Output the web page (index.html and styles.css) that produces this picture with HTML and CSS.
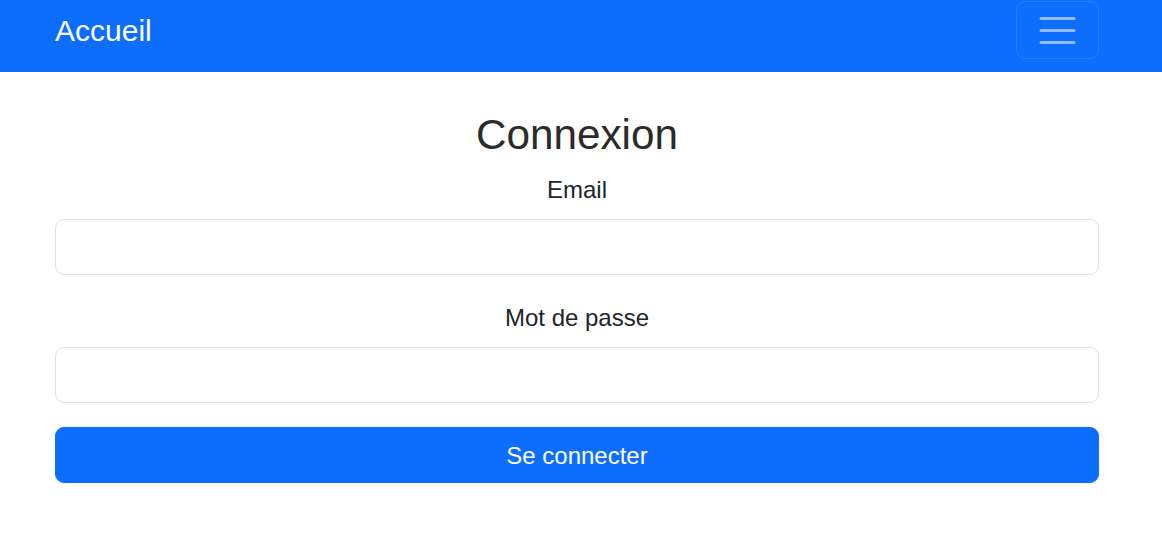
FILE: index.html
```html
<!DOCTYPE html>
<html lang="fr">
<head>
<meta charset="utf-8">
<title>Connexion</title>
<link rel="stylesheet" href="styles.css">
</head>
<body>
<nav class="navbar">
  <div class="nav-inner">
    <a class="brand" href="#">Accueil</a>
    <button class="toggler" type="button" aria-label="Menu">
      <svg class="toggler-icon" viewBox="0 0 30 30" width="45" height="45" aria-hidden="true">
        <path d="M4 7h22M4 15h22M4 23h22" stroke="rgba(255,255,255,0.55)" stroke-width="2" stroke-linecap="round" stroke-miterlimit="10" fill="none"/>
      </svg>
    </button>
  </div>
</nav>
<main class="content">
  <h2 class="title">Connexion</h2>
  <form class="form">
    <div class="field">
      <label class="label" for="email">Email</label>
      <input class="input" id="email" type="email">
    </div>
    <div class="field">
      <label class="label" for="password">Mot de passe</label>
      <input class="input" id="password" type="password">
    </div>
    <button class="submit" type="submit">Se connecter</button>
  </form>
</main>
</body>
</html>
```

FILE: styles.css
```css
* { box-sizing: border-box; }
html, body { margin: 0; padding: 0; }
body {
  font-family: "Liberation Sans", Arial, sans-serif;
  font-size: 24px;
  line-height: 1.5;
  color: #212529;
  background: #fff;
}
.navbar {
  background: #0d6efd;
  height: 72px;
}
.nav-inner {
  width: 1044px;
  margin-left: 55px;
  display: flex;
  justify-content: space-between;
  align-items: flex-start;
}
.brand {
  color: #fff;
  text-decoration: none;
  font-size: 30px;
  line-height: 45px;
  margin-top: 8px;
}
.toggler {
  margin-top: 1px;
  width: 83px;
  height: 58px;
  padding: 0;
  background: transparent;
  border: 1px solid rgba(255,255,255,0.1);
  border-radius: 9px;
  display: flex;
  align-items: center;
  justify-content: center;
}
.toggler-icon { display: block; }
.content {
  width: 1044px;
  margin-left: 55px;
  padding-top: 36px;
  text-align: center;
}
.title {
  margin: 0 0 12px;
  padding-top: 2px;
  height: 51px;
  font-weight: 500;
  font-size: 42.25px;
  line-height: 49px;
  color: #2b2b2b;
}
.form { margin: 0; }
.field { margin-bottom: 24px; }
.label {
  display: block;
  margin-bottom: 12px;
  padding-top: 1px;
  font-size: 24px;
  line-height: 35px;
}
.input {
  display: block;
  width: 100%;
  height: 56px;
  border: 1px solid #dee2e6;
  border-radius: 9px;
  background: #fff;
  font: inherit;
  padding: 9px 18px;
}
.submit {
  display: block;
  width: 100%;
  height: 56px;
  border: 1px solid #0d6efd;
  border-radius: 9px;
  background: #0d6efd;
  color: #fff;
  font-family: inherit;
  font-size: 24px;
  line-height: 36px;
  padding: 2px 0 0;
}
```
